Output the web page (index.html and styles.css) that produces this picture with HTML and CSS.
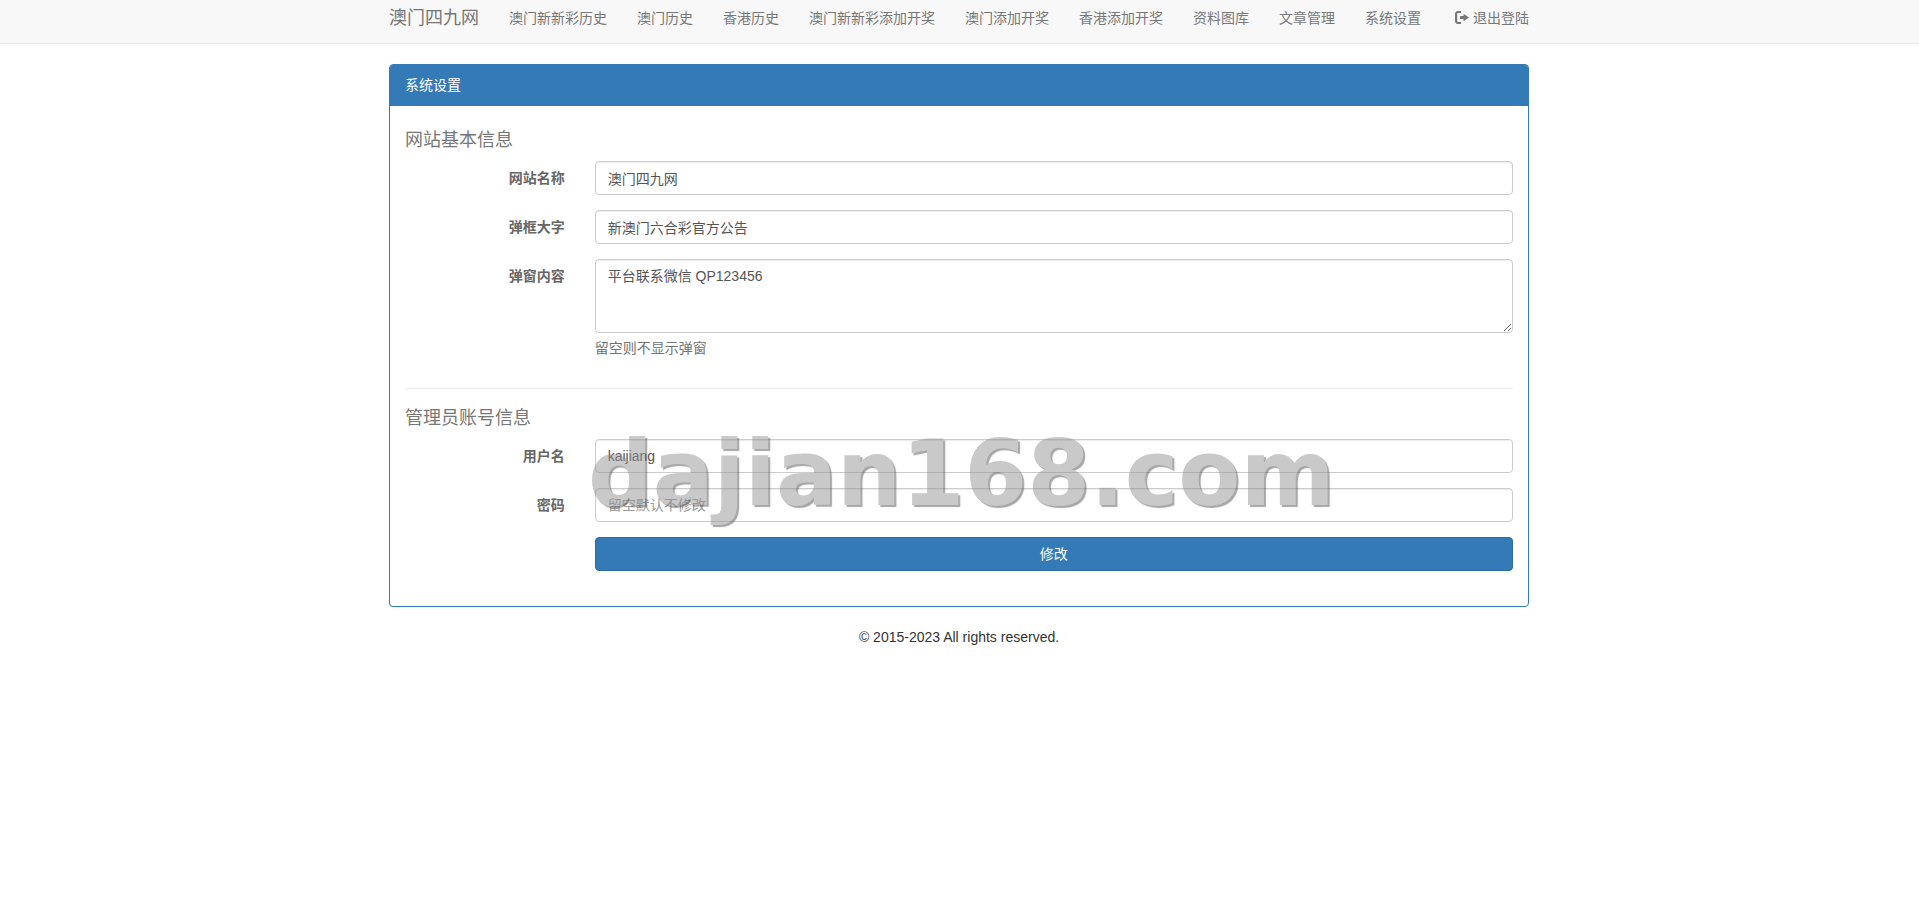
FILE: index.html
```html
<!DOCTYPE html>
<html lang="zh-CN">
<head>
  <meta charset="UTF-8" />
  <title>系统设置</title>
  <link rel="stylesheet" href="styles.css">
</head>
<body>

  <nav class="navbar">
    <div class="container navbar-inner">
      <a class="brand" href="#">澳门四九网</a>
      <ul class="nav">
        <li><a href="#">澳门新新彩历史</a></li>
        <li><a href="#">澳门历史</a></li>
        <li><a href="#">香港历史</a></li>
        <li><a href="#">澳门新新彩添加开奖</a></li>
        <li><a href="#">澳门添加开奖</a></li>
        <li><a href="#">香港添加开奖</a></li>
        <li><a href="#">资料图库</a></li>
        <li><a href="#">文章管理</a></li>
        <li><a href="#">系统设置</a></li>
      </ul>
      <ul class="nav nav-right">
        <li>
          <a href="#">
            <svg class="icon-logout" viewBox="0 0 14 13" width="14" height="13">
              <path d="M6 0H3C1.3 0 0 1.3 0 3v7c0 1.7 1.3 3 3 3h3v-2H3.2c-.6 0-1-.4-1-1V3c0-.6.4-1 1-1H6z"/>
              <path d="M8.5 2.8 14 6.5l-5.500 3.700V8H5V5h3.500z"/>
            </svg>
            退出登陆
          </a>
        </li>
      </ul>
    </div>
  </nav>

  <div class="container">
    <div class="panel">
      <div class="panel-heading">系统设置</div>
      <form class="panel-body">
        <h4>网站基本信息</h4>
        <div class="form-group">
          <label>网站名称</label>
          <div class="field"><input type="text" value="澳门四九网"></div>
        </div>
        <div class="form-group">
          <label>弹框大字</label>
          <div class="field"><input type="text" value="新澳门六合彩官方公告"></div>
        </div>
        <div class="form-group">
          <label>弹窗内容</label>
          <div class="field">
            <textarea rows="3">平台联系微信 QP123456</textarea>
            <span class="help-block">留空则不显示弹窗</span>
          </div>
        </div>

        <hr>

        <h4>管理员账号信息</h4>
        <div class="form-group">
          <label>用户名</label>
          <div class="field"><input type="text" value="kaijiang"></div>
        </div>
        <div class="form-group">
          <label>密码</label>
          <div class="field"><input type="password" placeholder="留空默认不修改"></div>
        </div>
        <div class="form-group">
          <label></label>
          <div class="field"><button type="button" class="btn">修改</button></div>
        </div>
      </form>
    </div>

    <p class="footer">© 2015-2023 All rights reserved.</p>
  </div>

  <div class="watermark">dajian168.com</div>

</body>
</html>
```

FILE: styles.css
```css
* {
  box-sizing: border-box;
}

body {
  margin: 0;
  font-family: "Liberation Sans", "Noto Sans CJK SC", sans-serif;
  font-size: 14px;
  line-height: 20px;
  background: #fff;
  color: #333;
}

a {
  text-decoration: none;
}

.container {
  width: 1170px;
  margin-left: calc(50% - 585.5px);
  padding: 0 15px;
}

.navbar {
  height: 44px;
  margin-bottom: 20px;
  background: #f8f8f8;
  border-bottom: 1px solid #e7e7e7;
}

.navbar-inner {
  display: flex;
  align-items: flex-start;
}

.brand {
  padding: 8px 15px 0 0;
  font-size: 18px;
  color: #777;
}

.nav {
  display: flex;
  flex: 1;
  margin: 0;
  padding: 0;
  list-style: none;
}

.nav a {
  display: block;
  padding: 8px 15px;
  color: #777;
}

.nav-right {
  flex: none;
  margin-right: -15px;
}

.icon-logout {
  vertical-align: -1px;
  fill: #777;
}

.panel {
  margin-bottom: 20px;
  background: #fff;
  border: 1px solid #337ab7;
  border-radius: 4px;
  box-shadow: 0 1px 1px rgba(0, 0, 0, .05);
}

.panel-heading {
  height: 41px;
  padding: 10px 15px;
  border-radius: 3px 3px 0 0;
  background: #337ab7;
  color: #fff;
}

.panel-body {
  padding: 15px 15px 20px;
}

h4 {
  margin: 10px 0;
  font-size: 18px;
  font-weight: 400;
  line-height: 19.8px;
  color: #777;
}

.form-group {
  display: flex;
  margin: 0 -15px 15px;
}

.form-group label {
  flex: 0 0 16.6667%;
  padding: 7px 15px 0;
  text-align: right;
  font-weight: 700;
  color: #666;
}

.field {
  flex: 1;
  padding: 0 15px;
}

input,
textarea {
  display: block;
  width: 100%;
  padding: 6px 12px;
  font: inherit;
  color: #555;
  background: #fff;
  border: 1px solid #ccc;
  border-radius: 4px;
  box-shadow: inset 0 1px 1px rgba(0, 0, 0, .075);
}

input {
  height: 34px;
}

textarea {
  height: 74px;
}

input::placeholder {
  color: #999;
}

.help-block {
  display: block;
  margin: 5px 0 10px;
  color: #737373;
}

hr {
  margin: 20px 0;
  border: 0;
  border-top: 1px solid #eee;
}

.btn {
  display: block;
  width: 100%;
  height: 34px;
  padding: 6px 12px;
  font: inherit;
  color: #fff;
  background: #337ab7;
  border: 1px solid #2e6da4;
  border-radius: 4px;
}

.footer {
  margin: 0;
  text-align: center;
  font-size: 14px;
  color: #333;
}

.watermark {
  position: absolute;
  left: 588px;
  top: 421px;
  font-family: "DejaVu Sans", sans-serif;
  font-size: 90.5px;
  font-weight: 700;
  line-height: 105px;
  white-space: nowrap;
  color: #949494;
  text-shadow: 2px 2px 1px #505050;
  opacity: .5;
  pointer-events: none;
}
```
